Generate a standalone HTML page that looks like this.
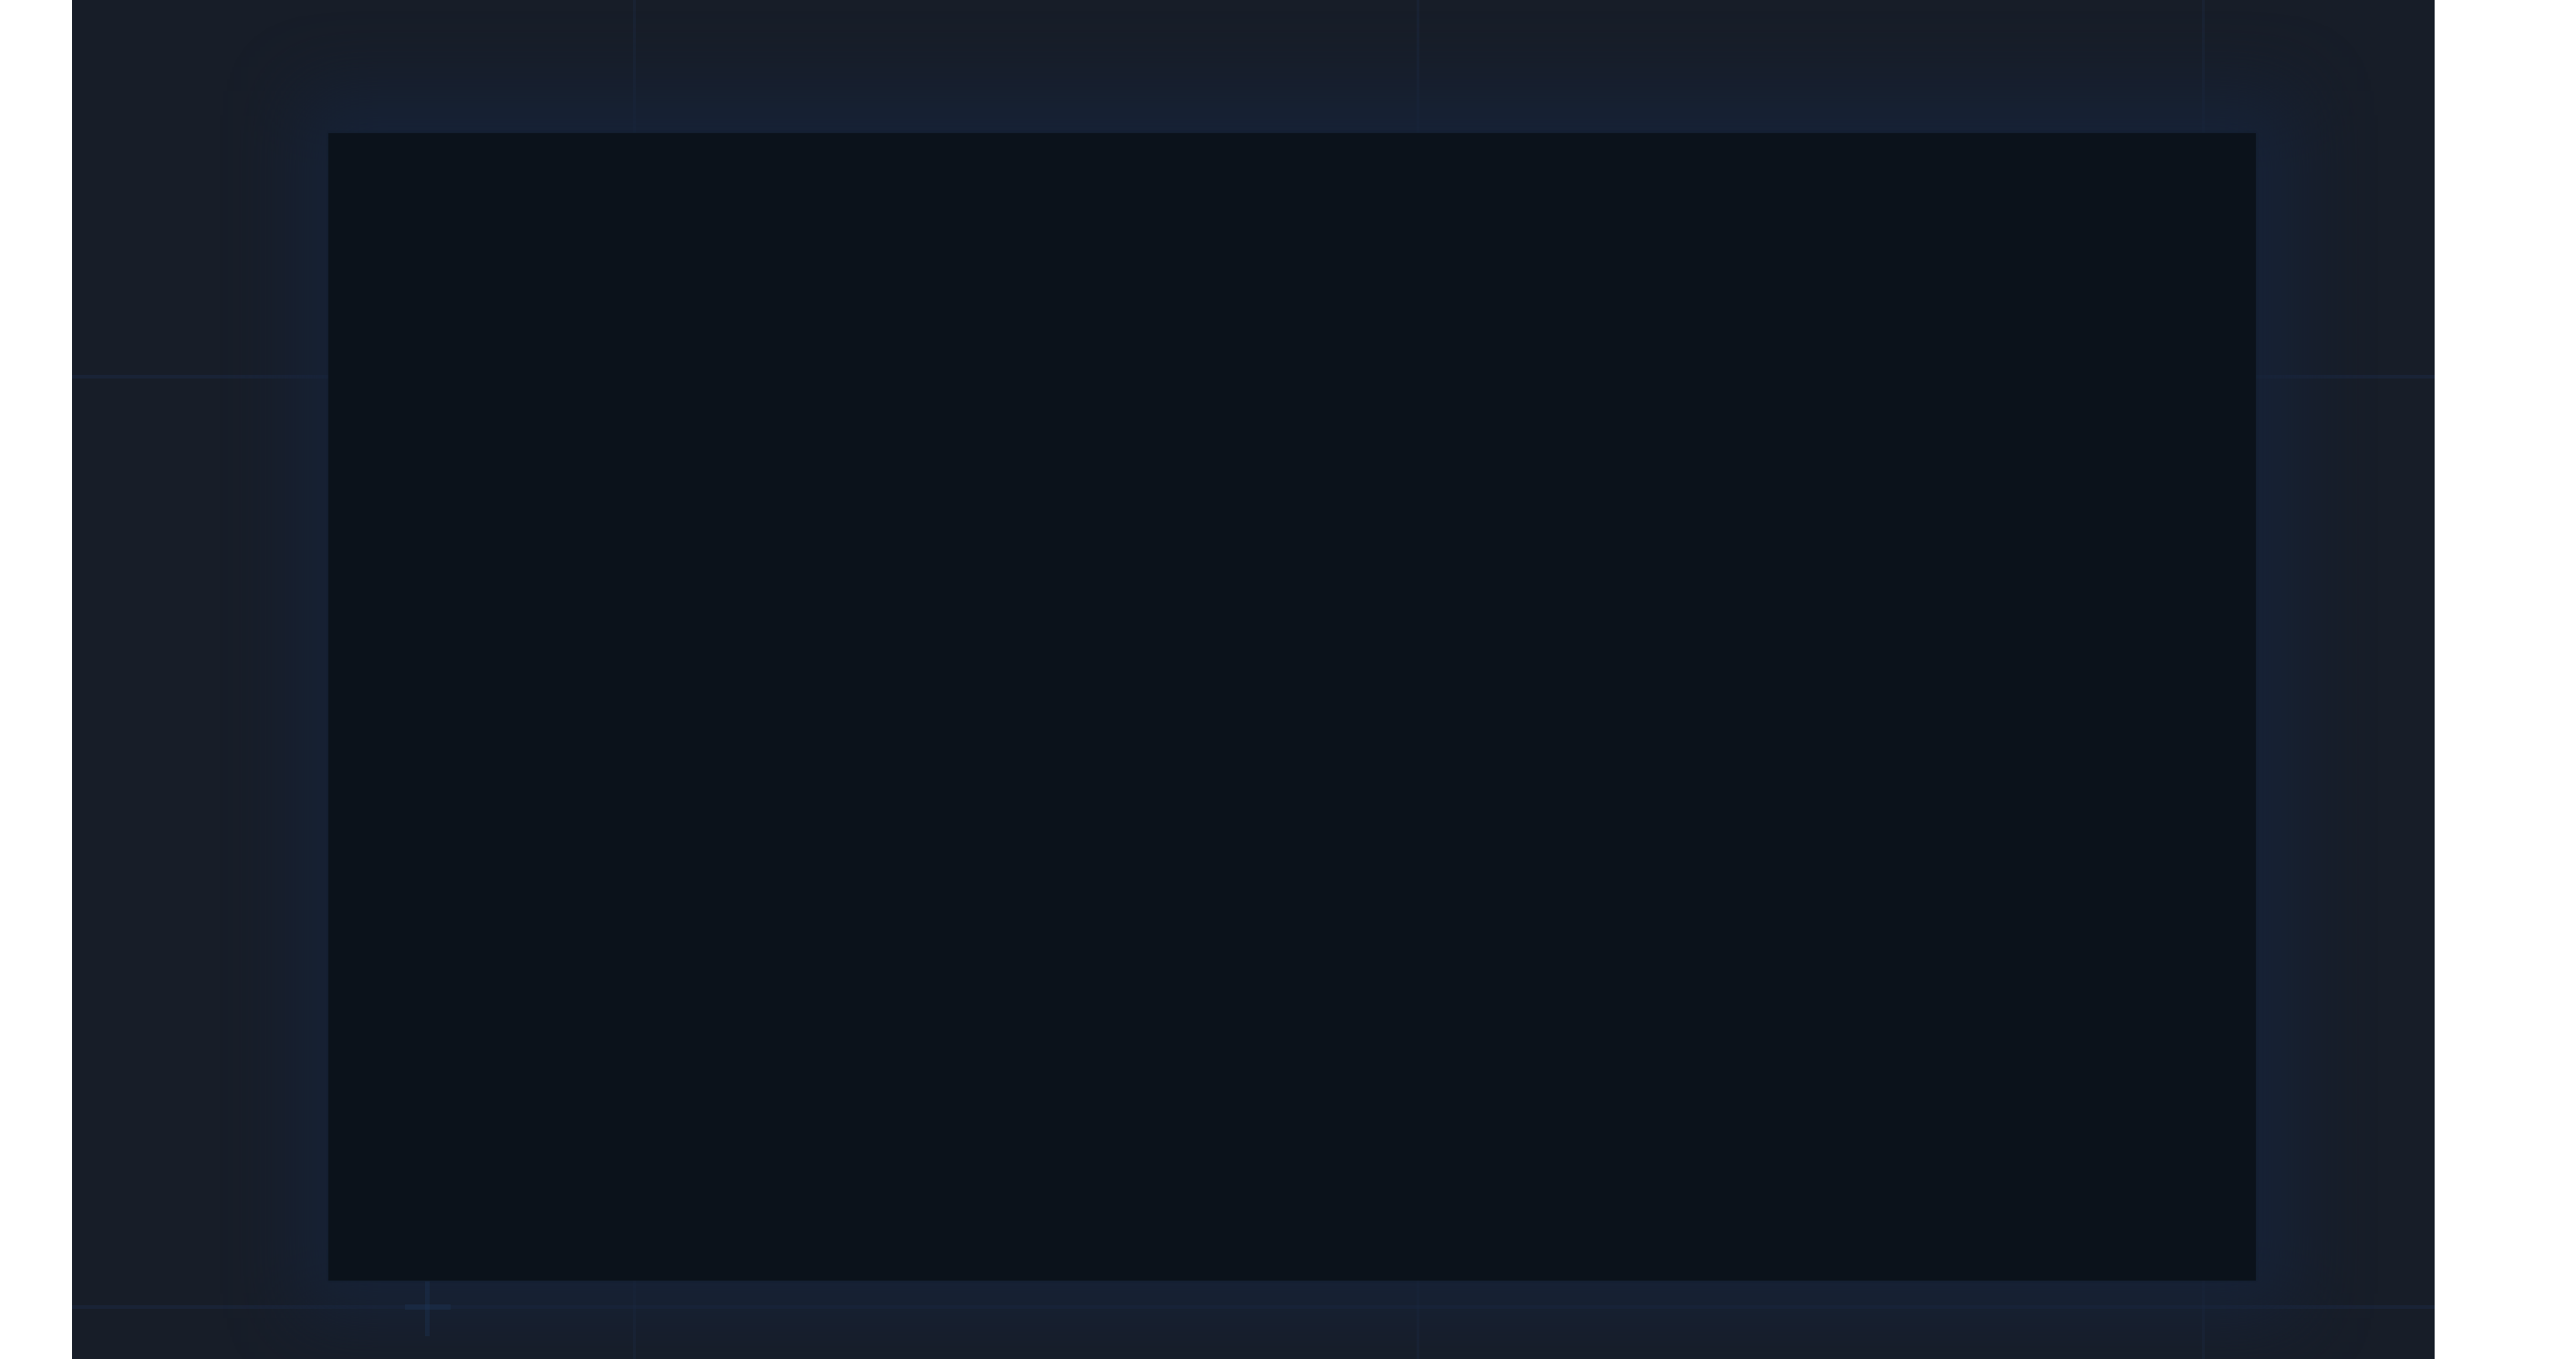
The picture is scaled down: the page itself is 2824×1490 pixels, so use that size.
<!DOCTYPE html>
<html><head><meta charset="utf-8"><style>
html,body{margin:0;padding:0;width:2824px;height:1490px;background:#fff;overflow:hidden}
.panel{position:absolute;left:79px;top:0;width:2590px;height:1490px;background:#171d28;overflow:hidden}
.vl{position:absolute;top:0;width:3px;height:1490px;background:rgba(30,50,80,0.25)}
.hl{position:absolute;left:0;height:4px;width:2590px;background:rgba(30,50,80,0.35)}
.glow{position:absolute;left:250px;top:100px;width:2190px;height:1345px;background:#16233a;filter:blur(40px);opacity:0.8}
.inner{position:absolute;left:281px;top:146px;width:2113px;height:1258px;background:#0b121b;box-shadow:0 0 2px #0f1a28}
</style></head><body>
<div class="panel">
<div class="vl" style="left:615px"></div>
<div class="vl" style="left:1474px"></div>
<div class="vl" style="left:2335px"></div>
<div class="hl" style="top:411px"></div>
<div class="hl" style="top:1431px"></div>
<div class="glow"></div>
<div class="inner"></div>
<div style="position:absolute;left:387px;top:1405px;width:5px;height:60px;background:rgba(30,55,90,0.35)"></div>
<div style="position:absolute;left:365px;top:1430px;width:50px;height:6px;background:rgba(30,55,90,0.35)"></div>
</div>
</body></html>
